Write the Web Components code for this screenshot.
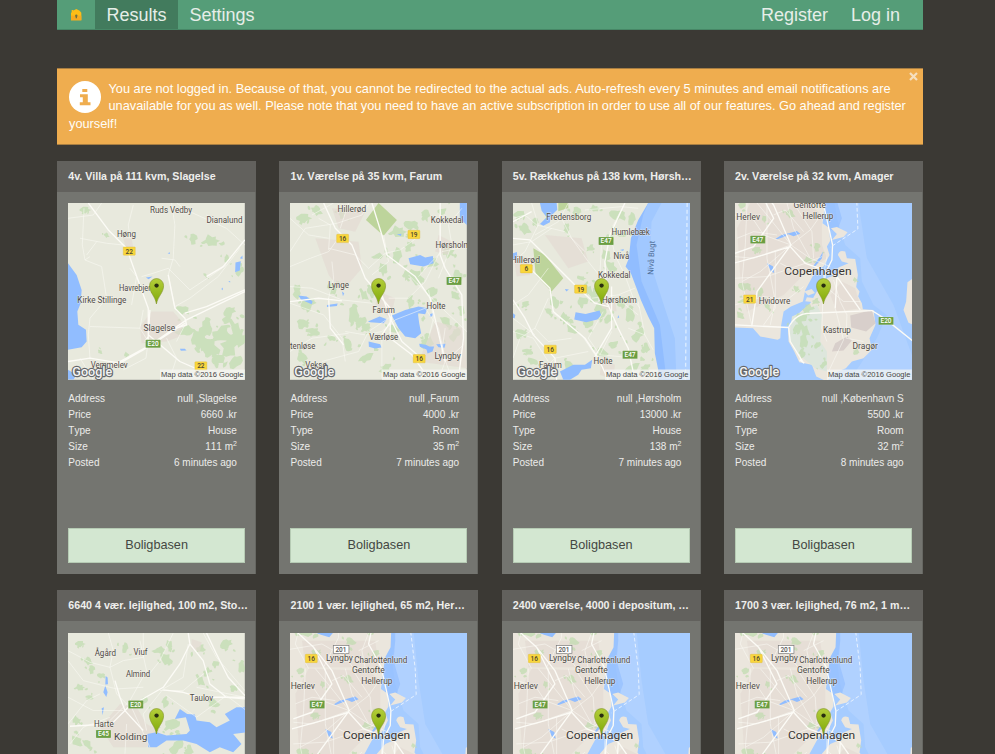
<!DOCTYPE html>
<html lang="en"><head><meta charset="utf-8"><title>Results</title>
<style>
html,body{margin:0;height:754px;overflow:hidden;background:#3b3934;font-family:"Liberation Sans",Arial,sans-serif;color:#ececea}
</style></head><body>
<app-page>
<nav-bar slot="nav"></nav-bar>
<info-alert slot="alert">You are not logged in. Because of that, you cannot be redirected to the actual ads. Auto-refresh every 5 minutes and email notifications are unavailable for you as well. Please note that you need to have an active subscription in order to use all of our features. Go ahead and register yourself!</info-alert>
<ad-card map="slagelse" name="4v. Villa på 111 kvm, Slagelse" address="null ,Slagelse" price="6660 .kr" type="House" size="111" posted="6 minutes ago"></ad-card>
<ad-card map="farum" name="1v. Værelse på 35 kvm, Farum" address="null ,Farum" price="4000 .kr" type="Room" size="35" posted="7 minutes ago"></ad-card>
<ad-card class="wide" map="horsholm" name="5v. Rækkehus på 138 kvm, Hørsholm" address="null ,Hørsholm" price="13000 .kr" type="House" size="138" posted="7 minutes ago"></ad-card>
<ad-card map="amager" name="2v. Værelse på 32 kvm, Amager" address="null ,København S" price="5500 .kr" type="Room" size="32" posted="8 minutes ago"></ad-card>
<ad-card class="wide" map="kolding" name="6640 4 vær. lejlighed, 100 m2, Storegade"></ad-card>
<ad-card map="copenhagen" name="2100 1 vær. lejlighed, 65 m2, Hermodsgade"></ad-card>
<ad-card map="copenhagen" name="2400 værelse, 4000 i depositum, privat"></ad-card>
<ad-card map="copenhagen" name="1700 3 vær. lejlighed, 76 m2, 1 måned"></ad-card>
</app-page>
<script>
const t=(x,y,s,w,size=25,extra='')=>`<text class="lb" x="${x}" y="${y}" font-size="${size}" textLength="${w}" lengthAdjust="spacingAndGlyphs" ${extra}>${s}</text>`;
const y=(x,yy,s)=>`<rect x="${x}" y="${yy}" width="36" height="25" rx="2" fill="#f9d63c" stroke="#d9b330"/><text class="sh" x="${x+18}" y="${yy+20}" fill="#4b4630">${s}</text>`;
const g=(x,yy,s)=>`<rect x="${x}" y="${yy}" width="45" height="24" rx="2" fill="#6b9e42" stroke="#fff" stroke-opacity=".5"/><text class="sh" x="${x+22.5}" y="${yy+19}" fill="#fff" font-weight="700">${s}</text>`;
const w=d=>`<path class="w" d="${d}"/>`, r=d=>`<path class="r" d="${d}"/>`, m=d=>`<path class="m" d="${d}"/>`, p=d=>`<path class="p" d="${d}"/>`, u=d=>`<path class="u" d="${d}"/>`;
// Irregular patches of woodland: a list of x, y, radius triples, each with its own outline and a few small outliers.
const woods=a=>{let seed=7;const rnd=()=>(seed=(seed*16807)%2147483647)/2147483647;
const blob=(x,yy,q,n)=>{let d='';const tilt=rnd()*3;for(let i=0;i<n;i++){const an=i/n*6.283,k=q*(.55+rnd()*.75),px=Math.cos(an)*k*1.15,py=Math.sin(an)*k*.75;d+=(i?'L':'M')+(x+px*Math.cos(tilt)-py*Math.sin(tilt)).toFixed(1)+' '+(yy+px*Math.sin(tilt)+py*Math.cos(tilt)).toFixed(1)}return d+'z'};
return p(a.map(([x,yy,q])=>blob(x,yy,q,13)+blob(x+(rnd()-.5)*q*3.4,yy+(rnd()-.5)*q*3.4,q*.38,8)+blob(x+(rnd()-.5)*q*4,yy+(rnd()-.5)*q*4,q*.28,7)).join(''))};
const coast=`
<rect x="-40" y="-140" width="700" height="750" fill="#a6ccff"/>
<path d="M320-140L330-60 320 0 330 70 355 150 400 190 405 260 440 330 480 360 450 430 400 510 350 580 700 580 555 480 500 330 420 190 400 60 380-140z" fill="#b0d1ff"/>
<path class="w" d="M290-140L330-140 330-60 325 0 345 70 330 110 300 100z" opacity=".6"/>
<path class="l" d="M-20-140L308-140 318-90 316-40 300-10 294 30 287 85 306 98 310 137 300 155 308 180 290 215 265 230 235 285 228 320 192 335 170 350 162 395 160 430 152 435 100 425 78 400 24 398-20 398z"/>
<path class="l" d="M312 100L330 96 362 112 350 126 315 135 330 117zM333 180Q337 163 355 170L360 190 385 192 393 240 388 276 398 290 394 305 405 325 408 343 440 345 446 390 428 430 435 465 410 490 375 500 357 520 320 535 300 560 268 545 255 510 217 502 202 470 185 440 183 405 210 360 250 325 275 280 300 250 325 240 335 218 365 205 345 200z"/>
<path class="l" d="M556 252L542 262 538 320 530 345 545 384 556 388zM232 290l22-8 10 12-20 8zM240 307l20 2-5 12-20-2z"/>
<path d="M195 365L270 330 285 360 280 440 300 470 300 530 265 520 205 470 187 430z" fill="#dde6dc"/>
${u('M70 24L250 30 285 60 285 150 300 190 240 230 170 300 60 350 40 250 30 100zM345 260L385 280 402 340 330 350 310 300zM50-60L270-60 280 20 60 20z')}
<path d="M370 362l65-17 11 40-28 25-45-12zM315 470l10-25 35-20 15 12-25 30z" fill="#d8cfcb"/>
${woods([[90,165,12],[190,55,14],[270,155,12],[245,195,13],[55,275,16],[100,290,12],[50,320,14],[110,70,10],[210,282,10],[265,320,12],[240,345,16],[218,370,20],[232,405,18],[215,400,14],[230,440,18],[270,450,11],[225,475,12],[45,30,13],[385,255,7],[40,360,12],[120,335,12],[290,510,11],[390,470,11],[195,-60,16],[270,-20,12],[90,-20,14],[120,-95,20],[50,-95,35],[250,-95,16]])}
${w('M146 131l18-11 20-5-5 8-28 10zM180 116l30-8 10 8-20 8zM120 205l12 25 10 4-4-20zM257 216l25-35 6-11-3 20-23 28zM75-90l30-12 16 15 25 0-14 17-25-8zM107-96l12-5 20 20z')}
${r('M24 60L80 75 110 120 192 150 250 190 310 215M90 24L120 60 192 150 100 230 45 260M24 185L80 190 192 150 250 105 282 60M60 24L55 150 45 260 75 395M24 250L120 245 235 205 285 185M120 24L120 190 145 320 130 390M180 24L200 100 250 190M140 60L175 45 230 110M24 330L110 305 180 315 230 275M200 24L255 110 260 190M30 130L80 110 150 120M160 205L230 240M145 170L145 340 110 390M300 185L290 240 285 400 300 440M320 255L340 320 360 360 358 430 410 440M290 270L350 320 400 320M325 340L350 435 305 530M70 24L30-50 50-135M-10-30L110-50 180-10 250 0M115 20L160-70 155-140M260-110L230-30 240 24M220-30L280-60M160-40L210 30')}
${m('M24 175L80 155 140 70 115 20 85-40 30-90M85-40L140 30 192 150 170 180 90 290 75 390M190 155L235 205 300 228 330 245 400 345M24 390L185 398Q205 355 250 355L435 347 475 372 560 440M20 205L110 180 190 155M265 -120L250-50 288 20 317 150 315 195 295 235 290 300M330 245L325 340M218 495L232 505M185 398L190 440 230 505')}
<path d="M370-140L390 24 393 102 310 157" fill="none" stroke="#e6f1ff" stroke-width="3" stroke-dasharray="11 7"/>`;
const maps={
slagelse:woods([[75,45,13],[140,120,8],[400,130,15],[455,137,22],[370,345,16],[500,190,10],[380,410,26],[410,430,30],[450,455,30],[480,420,32],[510,450,32],[470,495,22],[525,400,22],[510,350,16],[440,400,23],[525,500,22],[540,430,20],[500,375,15],[200,480,8],[120,470,7],[435,240,7],[540,230,13]])
+u('M275 350L340 350 370 385 360 425 320 440 245 445 240 395zM190 130l25 0 5 28-22 4z')
+w('M24 205L50 240 65 285 62 325 52 350 55 390 78 405 80 440 65 457 24 465zM527 203l16-4-3 28-14 5zM540 190l8-8 0 10zM258 248l20-3-12 8zM323 175l7-3v5zM24 525l25 15-8 14H24zM360 462l15 0 5 5-17 1zM484 282l5-4v8zM505 260l6-2v5z')
+r('M72 40L67 150 75 195 125 215 140 310 90 370 85 420 90 490M24 70L100 60 125 24M335 24L345 90 340 190 325 240 345 340M245 245L280 235 325 220 345 240 390 285 450 245 500 210M540 160L475 245 390 310 345 335M220 30L205 90 210 130M60 130L140 145 190 150M305 190L345 195 360 215M90 395L240 400M250 345L240 400 265 440 258 490 190 525M350 24L390 50 500 100 555 150M90 185L75 195M210 220L230 245 215 330M110 140L80 180M320 430L350 490 330 550M380 380L350 440M60 490L100 555M300 250L290 310M440 60L480 90')
+m('M85 24L145 105 200 160 225 230 265 340 265 440M24 500L90 490 180 505 250 465 380 375 555 290M270 345L265 425 255 440M100 530L180 500 290 440 375 385M325 240L345 340 375 370 380 390 350 400M555 285L440 335 375 355M265 420L360 500 440 535M555 135L490 215 440 245')
+y(190,156,'22')+g(257,435,'E20')+y(405,501,'22')
+t(270,53,'Ruds Vedby',127)+t(440,83,'Dianalund',108)+t(171,126,'Høng',57)+t(177,287,'Havrebjerg',108)+t(52,323,'Kirke Stillinge',147)+t(251,408,'Slagelse',95)+t(92,519,'Vemmelev',111),
farum:`<path d="M252 75L290 24 345 75 305 122z" fill="#bdd49b"/>`
+woods([[65,70,18],[105,45,16],[180,55,13],[350,110,22],[390,90,18],[345,180,20],[290,185,16],[300,220,18],[405,245,22],[450,205,18],[380,155,14],[270,285,22],[245,300,16],[80,325,20],[215,360,23],[235,380,18],[385,320,14],[450,290,20],[500,170,18],[520,300,14],[490,380,20],[520,420,18],[440,440,24],[335,400,16],[250,400,15],[60,390,18],[95,410,18],[150,430,13],[195,450,16],[250,490,20],[310,520,18],[400,350,18],[530,240,18],[45,290,18],[150,280,16],[430,60,18],[480,50,13],[540,350,14],[375,240,15],[60,490,16]])
+u('M290 290L340 310 325 370 280 330zM460 380L545 400 555 520 410 500zM470 120L510 140 500 180 460 170zM100 130L230 140 240 220 180 290 140 240zM150 40L250 50 220 110 170 100z')
+w('M534 24H555V90L534 70zM380 190L415 180 430 188 453 183 455 205 425 215 385 208zM345 118l14-2-2 7zM49 302l25 3 18 15-3 8-32-14zM135 330l32-4-2 7-30 3zM180 290l7 5-4 9zM258 380l35-15 22 8-10 12-40-3zM330 362L370 345 410 335 437 340 430 358 408 355 412 385 418 415 400 430 370 425 350 400zM260 440l35 8 4 10-20 3-18-5zM412 447l20 3 10 5 15 0-5 15-15 6-3-12-20-8zM463 448l28-1-3 12-18-2zM445 357l10-3-4 10-7 2z')
+r('M24 170L70 100 165 85 240 60 262 24M140 165L145 90 110 70M24 70L80 120 140 130M140 160L220 180 260 220 310 175M150 200L155 250 140 310M90 60L155 24M24 275L90 280 180 315 270 325M180 115L140 170 85 190 24 215M305 120L320 200 270 240M410 245L440 210 480 170 555 155M310 175L355 165 410 125M24 325L125 360 180 430 190 500M190 410L250 420 300 410 340 375 430 340M440 285L455 370 440 430M540 40L500 90 510 150 470 250M475 170L430 260 380 310 320 310M24 470L90 430 200 415M320 370L260 410 230 470 120 500M380 240L470 330 555 410M490 400L480 470 510 550M300 420L300 550M470 555L490 500 545 450M430 340L470 400 490 490M200 24L175 100')
+m('M125 24L160 100 210 150 250 250 325 340 330 375 300 420M270 24L300 120 315 180 400 245 445 310 490 500M475 24L475 180 490 220 540 300 545 430 530 550M300 300L325 370 360 440 430 500M325 365L325 430 390 480 440 550M24 320L110 310 180 318M140 310L145 400 185 450')
+y(164,118,'16')+y(378,106,'19')+g(494,246,'E47')+y(394,479,'16')
+t(167,51,'Hillerød',86)+t(447,85,'Kokkedal',98)+t(461,159,'Hørsholm',105)+t(139,278,'Lynge',62)+t(434,342,'Holte',57)+t(272,355,'Farum',67)+t(262,436,'Værløse',87)+t(24,463,'tenløse',76)+t(458,492,'Lyngby',79,27)+t(70,519,'Veksø',65),
horsholm:`<path d="M85 160L120 180 175 250 140 290 92 240zM160 24h30v15l-30 10z" fill="#bdd49b"/>`
+woods([[45,60,16],[60,100,18],[215,50,16],[270,40,13],[340,60,20],[380,70,16],[355,120,13],[300,180,18],[320,215,16],[255,160,13],[270,300,20],[230,320,18],[250,285,16],[355,320,16],[375,360,20],[310,370,16],[285,345,22],[250,385,18],[180,370,16],[200,400,16],[130,350,14],[400,420,20],[425,460,16],[290,470,18],[60,330,12],[45,420,18],[70,470,14],[85,500,16],[190,520,18],[380,520,20],[420,520,16],[230,250,12],[150,320,18],[185,100,13],[315,130,13],[90,80,13],[325,450,14]])
+u('M24 175L70 190 75 240 35 245zM290 300L330 310 335 350 290 340zM290 490L330 510 325 555 285 540zM120 120L230 130 250 200 190 220z')
+`<path class="w" d="M430 24L400 75 378 130 372 190 362 215 378 235 395 280 408 315 430 365 448 400 450 475 460 525 460 555H556V24z"/><path d="M415 60L395 150 410 260 465 390 485 555H556V24H430z" fill="#a1c8ff"/><path d="M470 24L440 80 435 200 480 340 510 430 515 555H556V24z" fill="#aed0ff"/><path d="M547 24L542 555" fill="none" stroke="#dcecff" stroke-width="4" stroke-dasharray="12 8"/>`
+w('M105 24h50l2 20-20 20-2 18-20 10-10-5 20-20-15-20zM24 175l12-4v15l-6 10-6-2zM212 352l30 5 42-10 5 15-12 12-33 8-36-8zM180 282l12 2-8 6zM165 530L205 510 240 510 262 495 258 520 230 525 220 540 195 555H175zM24 355l7 5-2 10h-5zM345 165l12-3-2 6zM340 360l3 8-5 2z')
+r('M80 24L100 90 60 170 24 200M24 70L60 60 95 90 180 110 240 170M190 24L160 80 90 120M240 45L350 35 400 40M170 70L200 130 250 200 290 250M290 140L285 240 305 330M360 24L315 110 330 180 360 240 385 310 405 340M24 150L80 140 140 100M130 220L70 300 24 330M130 310L90 400 45 430 24 490M140 350L230 420 270 480M90 400L130 440 200 430M295 350L250 430 285 480 320 410M400 320L420 420 445 465M350 320L400 360M260 310L340 300 390 280M24 410L85 430 130 500M24 370L90 420M370 400L420 420M285 480L400 490M85 555L150 490 250 470')
+m('M24 130L75 135 165 225 210 270 270 325 310 335M360 24L315 120 300 200 305 320 340 400 370 460 390 555M65 210L135 280 145 350 240 430 280 490 310 555M24 315L60 370 85 420 150 490 155 555M320 275L320 400 270 485M24 80L80 50')
+y(46,209,'6')+g(281,126,'E47')+y(209,270,'19')+y(118,451,'16')+g(353,468,'E47')
+t(124,74,'Fredensborg',135)+t(320,119,'Humlebæk',115)+t(326,191,'Nivå',47)+t(17,204,'Hillerød',88)+t(279,250,'Kokkedal',98)+t(291,325,'Hørsholm',105)+t(266,508,'Holte',57)+t(102,520,'Farum',69)+`<text transform="translate(445 240) rotate(-87)" font-size="24" textLength="102" lengthAdjust="spacingAndGlyphs" fill="#4f6e99">Nivå Bugt</text>`,
amager:coast+g(70,122,'E47')+y(50,300,'21')+g(455,366,'E20')+t(200,40,'Gentofte',97)+t(28,74,'Herlev',71)+t(227,73,'Hellerup',93)+t(172,239,'Copenhagen',202,35,'style="fill:#373432"')+t(95,327,'Hvidovre',95)+t(288,415,'Kastrup',84)+t(377,461,'Dragør',76),
copenhagen:`<g transform="translate(10 107)">${coast}</g><rect x="154" y="62" width="47" height="23" fill="#fff" stroke="#777" stroke-width="2"/><text class="sh" x="177" y="80" fill="#555">201</text>`+y(70,88,'16')+g(83,227,'E47')+t(132,109,'Lyngby',81)+t(217,115,'Charlottenlund',159)+t(210,145,'Gentofte',99)+t(26,192,'Herlev',73)+t(238,176,'Hellerup',94)+t(183,343,'Copenhagen',202,35,'style="fill:#373432"'),
kolding:`<g transform="translate(-30 -133)">`
+woods([[90,190,12],[115,240,13],[125,265,12],[90,320,13],[155,285,10],[225,200,13],[330,210,18],[355,190,13],[350,235,18],[450,205,15],[470,275,12],[495,250,12],[450,300,16],[530,190,16],[575,260,15],[280,360,13],[345,365,13],[375,430,18],[80,420,13],[80,480,17],[110,490,17],[380,500,22],[420,510,17],[490,365,18],[360,435,20],[550,325,12],[120,350,10]])
+u('M210 370L260 380 290 430 330 450 290 500 190 500 150 440zM425 175l30 10-5 30-25-10z')
+w('M292 460L320 455 350 465 410 460 420 450 408 410 375 415 390 385 412 400 435 402 440 420 480 425 500 440 540 420 525 400 560 380H590V455L550 460 575 490 550 515 510 500 480 515 440 490 400 480 350 480 320 500 295 500zM167 286l6 5 1 20-8 1zM160 335l6-20 7 20-4 14zM155 383l7-3-4 24z')
+r('M175 157L190 210 180 260 200 340 240 380M54 210L120 245 180 260 220 240 280 230 280 157M270 180L290 270 240 360 180 420M340 325L280 400 290 450M280 320L200 325 100 300 54 240M370 157L330 240 290 290M230 430L225 520M340 325L400 290 415 190M350 345L440 410 530 345 590 390M460 157L500 230 585 330M54 430L110 360 150 340M180 410L100 440 60 490M460 280L400 330 330 330M54 350L130 390 220 390M240 370L300 500M585 350L440 320')
+m('M415 157L420 190 390 250 340 320 235 380 185 430 60 437M420 190L460 240 480 310 530 350 585 355M340 328L400 335 450 350 585 350M470 157L500 220 535 290 585 345M195 300L210 350 225 390 280 450')
+g(235,360,'E20')+g(138,448,'E45')+t(134,225,'Ågård',64)+t(251,224,'Viuf',42)+t(228,289,'Almind',73)+t(420,362,'Taulov',70)+t(132,438,'Harte',59)+t(192,477,'Kolding',100,30)+'</g>'
};
const define=(n,html)=>customElements.define(n,class extends HTMLElement{constructor(){super();this.attachShadow({mode:'open'})}connectedCallback(){this.shadowRoot.innerHTML=typeof html==='function'?html(this):html}});
define('app-page',`<style>:host{display:block;width:866px;margin-left:57px}.alert{margin-top:38px}.cards{display:grid;grid-template-columns:repeat(4,199.2px);justify-content:space-between;row-gap:16px;margin-top:16px}</style>
<slot name="nav"></slot><div class="alert"><slot name="alert"></slot></div><main class="cards"><slot></slot></main>`);
define('nav-bar',`<style>:host{display:flex;height:30px;box-sizing:border-box;background:#559d78;border-bottom:1px solid #478766;font-size:18px;color:#e6eee8}span,.logo{display:flex;align-items:center;padding:2px 11.5px 0;height:29px;box-sizing:border-box}.logo{width:38px;padding:0 11.5px}.on{background:#427b5d}.end{margin-left:auto}</style>
<div class="logo"><svg width="15" height="14" viewBox="0 0 45 42"><path d="M6 14L12 8 22 3 32 8 37 14V37H6z" fill="#fdbd16"/><path d="M6 23H37V37H6z" fill="#f6aa20"/><path d="M8 6h5v6H8z" fill="#fdbd16"/><circle cx="22" cy="23" r="3.5" fill="#6c7140"/><path d="M20 23h4v8h-4z" fill="#6c7140"/></svg></div><span class="on">Results</span><span>Settings</span><span class="end">Register</span><span style="padding-right:23px">Log in</span>`);
define('info-alert',`<style>:host{display:block;position:relative;box-sizing:border-box;height:76.5px;padding:12px 12px;background:#efad4f;border:solid #a87e42;border-width:1px 0;font-size:12.75px;line-height:17.5px;color:#fffdf8}.i{float:left;width:32px;height:32px;margin:0 7.5px 0 0}.x{position:absolute;right:5px;top:3px;width:9px;height:9px}p{margin:-1.5px 0 0}</style>
<svg class="i" viewBox="0 0 32 32"><circle cx="16" cy="16" r="16" fill="#fff"/><path d="M13.3 8h5v3h-5zM11 13.3h7.8v8h2.7v3H10.8v-3h3v-5H11z" fill="#efad4f"/></svg><p><slot></slot></p><svg class="x" viewBox="0 0 9 9"><path d="M1 1l7 7M8 1l-7 7" stroke="#f5dfbf" stroke-width="2.2"/></svg>`);
define('area-map',el=>`<style>:host{display:block;aspect-ratio:1}svg{display:block;width:100%;height:100%}text{font-family:Roboto,sans-serif}.w{fill:#91bdff}.l{fill:#ebe6dd}.u{fill:#e4dad3;opacity:.65}.p{fill:#bfdcae;opacity:.7}.r,.m{fill:none;stroke:#fcfbf6;stroke-width:2;stroke-linejoin:round}.r{opacity:.8}.m{stroke-width:4}.lb{fill:#4d4945;stroke:#f8f6ef;stroke-opacity:.7;stroke-width:2.5;paint-order:stroke}.sh{font-size:19.5px;text-anchor:middle;font-weight:500}</style>
<svg viewBox="24 24 531 531" preserveAspectRatio="xMidYMin slice"><rect x="24" y="24" width="531" height="531" fill="#e8e9dd"/>${maps[el.getAttribute('name')]}
<defs><linearGradient id="pin" x2="0" y2="1"><stop stop-color="#b4ce3a"/><stop offset="1" stop-color="#80aa0a"/></linearGradient></defs><path d="M289.5 327C286 303 269 294 269 272A21 21 0 0 1 311 272C311 294 294 303 289.5 327z" fill="url(#pin)" stroke="#83952b" stroke-width="2"/><circle cx="290" cy="272" r="6.5" fill="#292e10"/>
<rect x="300" y="524" width="255" height="31" fill="#f5f5f2" opacity=".75"/><text x="303" y="546" font-size="21" textLength="248" lengthAdjust="spacingAndGlyphs" fill="#444" style="font-family:'Liberation Sans'">Map data ©2016 Google</text><text x="37" y="543" font-size="38" textLength="120" lengthAdjust="spacingAndGlyphs" fill="#f4f4f4" stroke="#65686a" stroke-width="7" stroke-linejoin="round" paint-order="stroke" font-weight="500">Google</text></svg>`);
define('ad-card',el=>{const a=n=>el.getAttribute(n)||'';return `<style>:host{display:flex;flex-direction:column;height:413.5px;box-sizing:border-box;background:#747570;min-width:0;box-shadow:inset -1px 0 #666762}h2{margin:0;height:31px;flex:none;box-sizing:border-box;padding:0 9px 0 11.3px;font-size:10.68px;line-height:30px;background:#62615d;overflow:hidden;text-overflow:ellipsis;white-space:nowrap;color:#eeeeec}:host(.wide) h2{padding-right:6px}area-map{margin:11.5px 11.2px 11.5px}dl{display:grid;grid-template-columns:auto auto;justify-content:space-between;margin:0 19.3px 0 11.3px;font-size:10.03px;font-kerning:none;line-height:16px;grid-auto-rows:16px}dt,dd{margin:0;white-space:nowrap}dd{text-align:right}sup{font-size:7px;line-height:0}button{display:block;margin:auto 11.2px 11.5px;height:34.5px;flex:none;border:1px solid #b6cbb4;background:#d3e7d1;color:#444743;font:12.7px "Liberation Sans",sans-serif;padding:0}</style>
<h2>${a('name')}</h2><area-map name="${a('map')}"></area-map>${a('price')?`<dl><dt>Address</dt><dd>${a('address')}</dd><dt>Price</dt><dd>${a('price')}</dd><dt>Type</dt><dd>${a('type')}</dd><dt>Size</dt><dd>${a('size')} m<sup>2</sup></dd><dt>Posted</dt><dd>${a('posted')}</dd></dl><button>Boligbasen</button>`:''}`});
</script></body></html>
